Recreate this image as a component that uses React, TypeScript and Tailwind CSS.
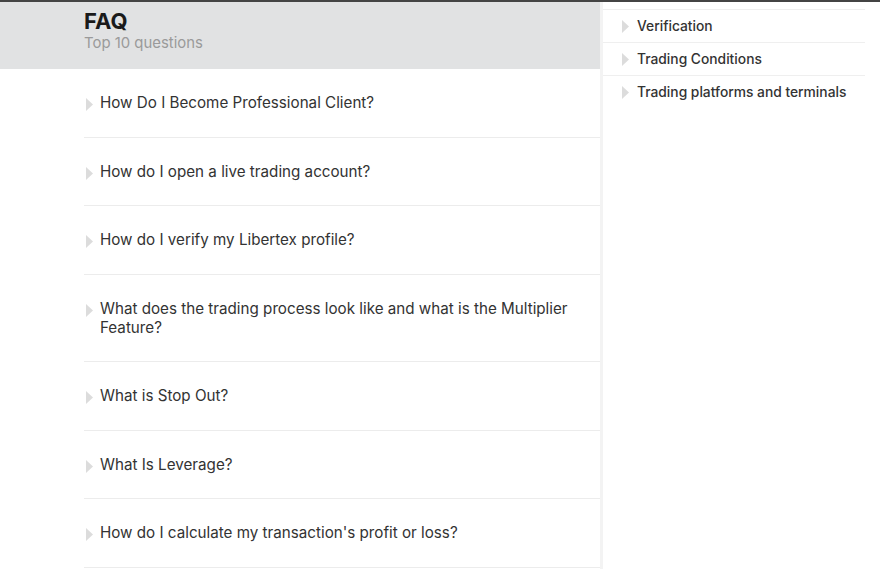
import React from "react";

const questions = [
  "How Do I Become Professional Client?",
  "How do I open a live trading account?",
  "How do I verify my Libertex profile?",
  "What does the trading process look like and what is the Multiplier Feature?",
  "What is Stop Out?",
  "What Is Leverage?",
  "How do I calculate my transaction's profit or loss?",
];

const cats = ["Verification", "Trading Conditions", "Trading platforms and terminals"];

function Arrow({ className = "" }: { className?: string }) {
  return (
    <svg width="7" height="13" viewBox="0 0 7 13" className={className}>
      <path d="M0 0 L7 6.5 L0 13 Z" fill="#dcdcdc" />
    </svg>
  );
}

export default function App() {
  return (
    <div
      className="w-[880px] h-[569px] overflow-hidden bg-white border-t-2 border-[#444] flex"
      style={{ fontFamily: "Inter, 'Open Sans', sans-serif" }}
    >
      <div className="w-[600px] shrink-0 flex flex-col">
        <div className="h-[67px] bg-[#e1e2e3] pl-[84px] pt-[6px]">
          <div className="text-[22px] font-bold text-[#1a1a1a] leading-[26px]">FAQ</div>
          <div className="text-[14.9px] text-[#9a9a9a] leading-[18px]">Top 10 questions</div>
        </div>
        <div className="pl-[84px]">
          {questions.map((q) => (
            <div key={q} className="border-b border-[#ececec] py-[24.25px] flex">
              <Arrow className="shrink-0 mt-[5px] ml-[2px] mr-[7px]" />
              <div className="text-[15.2px] leading-[19px] text-[#333] pr-[16px]">{q}</div>
            </div>
          ))}
        </div>
      </div>
      <div className="flex-1 border-l-[3px] border-[#f3f3f3] pt-[7px]">
        <div className="w-[262px] border-t border-[#efefef]">
          {cats.map((c) => (
            <div key={c} className="h-[33px] border-b border-[#efefef] flex items-center last:border-b-0">
              <Arrow className="shrink-0 ml-[19px] mr-[8px]" />
              <div className="text-[13.8px] font-medium text-[#333]">{c}</div>
            </div>
          ))}
        </div>
      </div>
    </div>
  );
}
